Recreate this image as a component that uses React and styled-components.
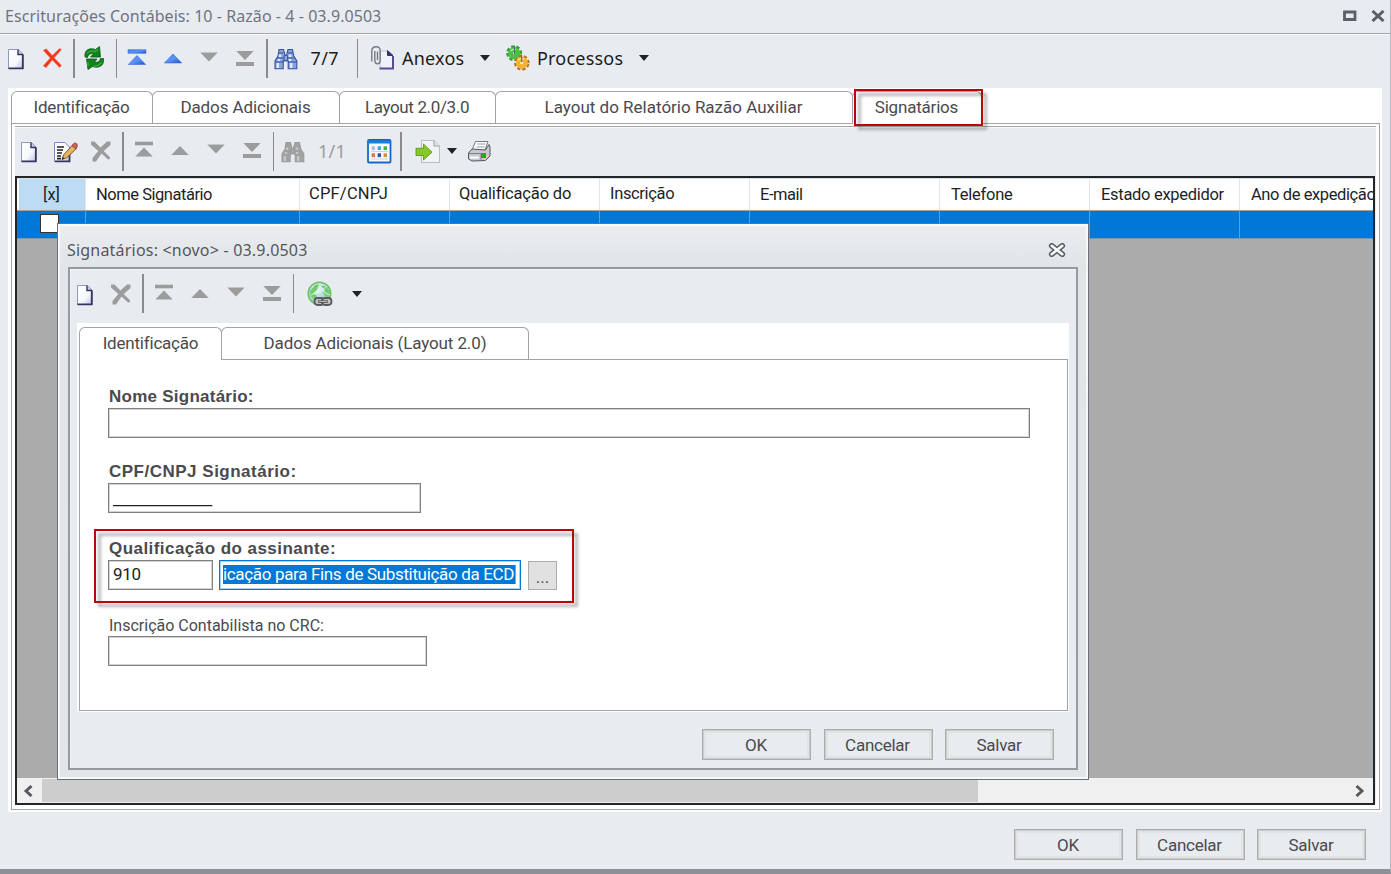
import React from 'react';
import styled, { createGlobalStyle, css } from 'styled-components';

const GlobalStyle = createGlobalStyle`
  * {
    box-sizing: border-box;
  }

  body {
    margin: 0;
    overflow: hidden;
    background: #e8ecf1;
    font-family: Roboto, "Liberation Sans", sans-serif;
    font-size: 17px;
    color: #4a4a4e;
  }

  button, input {
    font: inherit;
    color: inherit;
  }
`;

const Window = styled.div`
  width: 1391px;
  height: 874px;
  display: flex;
  flex-direction: column;
  background: #e8ecf1;
  border-right: 1px solid #b4b8be;
  border-bottom: 5px solid #8d9097;
  position: relative;
`;

const TitleBar = styled.header`
  height: 34px;
  flex: none;
  display: flex;
  align-items: center;
  justify-content: space-between;
  padding: 0 5px;
  border-bottom: 1px solid #a6a6a6;
  box-shadow: 0 1px 0 #f8f8f8;
`;

const Title = styled.h1`
  margin: -1px 0 0;
  font-family: "Noto Sans", sans-serif;
  font-weight: 400;
  font-size: 16px;
  line-height: 22px;
  letter-spacing: ${({ $ls }) => $ls || 0}px;
  color: ${({ $color }) => $color || '#70737f'};
  white-space: nowrap;
`;

const WindowControls = styled.div`
  display: flex;
  gap: 14px;
  margin-top: -1px;
`;

const Toolbar = styled.div`
  height: ${({ $h }) => $h}px;
  flex: none;
  display: flex;
  align-items: center;
  padding-left: ${({ $pl }) => $pl || 0}px;
  padding-bottom: ${({ $pb }) => $pb || 0}px;
`;

const Tool = styled.span`
  display: flex;
  flex: none;
  width: 24px;
  height: 24px;
  margin-left: ${({ $ml }) => $ml ?? 12}px;
  margin-top: ${({ $mt }) => $mt || 0}px;

  svg {
    overflow: visible;
  }
`;

const Separator = styled.span`
  flex: none;
  width: 1.5px;
  height: 39px;
  margin-left: ${({ $ml }) => $ml}px;
  background: #8b8b8b;
`;

const ToolText = styled.span`
  flex: none;
  width: ${({ $w }) => $w}px;
  margin-left: ${({ $ml }) => $ml}px;
  font-family: "Noto Sans", sans-serif;
  font-size: 18px;
  line-height: 24px;
  letter-spacing: ${({ $ls }) => $ls || 0}px;
  color: ${({ $muted }) => ($muted ? '#9b9b9b' : '#1c1c1c')};
  white-space: nowrap;
`;

const Caret = styled.span`
  flex: none;
  margin-left: ${({ $ml }) => $ml}px;
  border: 5.5px solid transparent;
  border-top: 6px solid #222;
  border-bottom: 0;
`;

const TabArea = styled.section`
  display: flex;
  flex-direction: column;
  flex: none;
  background: #fff;
  width: 1374px;
  height: 724px;
  margin-left: 7.5px;
  padding: 3px 2px 2px 3px;
`;

const TabStrip = styled.nav`
  display: flex;
  height: 32px;
  flex: none;
`;

const Tab = styled.div`
  width: ${({ $w }) => $w}px;
  margin-right: -1px;
  display: flex;
  align-items: center;
  justify-content: center;
  padding-bottom: 2px;
  border: 1px solid #a3a3a3;
  border-bottom: 0;
  border-radius: 6px 6px 0 0;
  background: #fff;
  letter-spacing: ${({ $ls }) => $ls || 0}px;
  white-space: nowrap;
  position: relative;

  ${({ $active }) => $active && css`
    z-index: 1;
    margin-bottom: -1px;
    padding-bottom: 3px;
  `}
`;

const TabPage = styled.div`
  flex: 1;
  min-height: 0;
  display: flex;
  flex-direction: column;
  border: 1px solid #a3a3a3;
  background: #fff;
`;

const SignersPanel = styled.div`
  flex: 1;
  min-height: 0;
  margin: 2px 3px 5px 3px;
  border-top: 1px solid #a3a3a3;
  display: flex;
  flex-direction: column;
  background: #e8ecf1;
  box-shadow: inset 0 1px 0 #f7f7f7;
`;

const Grid = styled.div`
  flex: 1;
  min-height: 0;
  margin: 0 1px -1px 0.5px;
  border: 2px solid #22262b;
  background: #ababab;
  display: flex;
  flex-direction: column;
`;

const gridColumns = css`
  display: grid;
  grid-template-columns: 69px 214px 150px 150px 150px 190px 150px 150px 134px;
  overflow: hidden;
`;

const GridHead = styled.div`
  ${gridColumns}
  height: 33px;
  flex: none;
  background: #fff;
  border-top: 1px solid #dde0e3;
  border-bottom: 1px solid #a0a0a0;
  color: #1e1e24;
`;

const HeadCell = styled.div`
  padding: ${({ $up }) => ($up ? 4 : 5)}px 0 0 ${({ $pl }) => $pl || 10}px;
  border-right: 1px solid #e4e4e4;
  line-height: 22px;
  font-size: 16.5px;
  letter-spacing: ${({ $ls }) => $ls || 0}px;
  white-space: nowrap;

  ${({ $selector }) => $selector && css`
    background: linear-gradient(#bcdcf4, #bcdcf4) no-repeat 2px 0;
    text-align: center;
    padding-left: 1px;
  `}
`;

const GridRow = styled.div`
  ${gridColumns}
  height: 28px;
  flex: none;
  background: #0078d7;
  border-bottom: 1px solid #7d98ad;
`;

const RowCell = styled.div`
  border-right: 1px solid #7e96aa;
`;

const CheckBox = styled.span`
  display: block;
  width: 19px;
  height: 19px;
  margin: 3px 0 0 23px;
  border: 1.5px solid #333;
  background: #fff;
`;

const ScrollBar = styled.div`
  height: 25px;
  margin-top: auto;
  display: flex;
  align-items: center;
  background: #f0f0f0;
`;

const ScrollArrow = styled.span`
  width: 25px;
  display: flex;
  justify-content: center;
  padding-right: ${({ $pr }) => $pr || 0}px;
`;

const ScrollThumb = styled.span`
  width: 936px;
  height: 23px;
  margin-right: auto;
  background: #cdcdcd;
`;

const ButtonBar = styled.div`
  display: flex;
  gap: 12.5px;
  justify-content: flex-end;
  padding: ${({ $pad }) => $pad};
`;

const Button = styled.button`
  width: 109px;
  height: 31px;
  padding: 0 1px 0 0;
  border: 1px solid #adadad;
  background: #e8ecf1;
  box-shadow: inset 0 0 0 1px #cbccce, inset 0 0 0 3px #e2e3e3;
  letter-spacing: ${({ $ls }) => $ls ?? -0.25}px;
`;

const Dialog = styled.div`
  position: absolute;
  left: 57px;
  top: 223px;
  width: 1032px;
  height: 557px;
  border: 1px solid #69707a;
  box-shadow: inset 0 0 0 2px #f7f8f9;
  background: linear-gradient(#ebedf0 0, #e1e5e8 44px, #e3e6e9);
  padding: 0 10px;
  display: flex;
  flex-direction: column;
`;

const DialogTitleBar = styled.div`
  height: 43px;
  flex: none;
  display: flex;
  align-items: center;
  justify-content: space-between;
  padding: 9px 12px 0 0;

  h2 {
    margin-left: -1px;
  }
`;

const DialogBody = styled.div`
  height: 503px;
  border: 2px solid #959aa2;
  background: #e8ecf1;
  box-shadow: inset 1px 1px 0 #f3f4f6;
  display: flex;
  flex-direction: column;
`;

const DialogTabs = styled(TabArea)`
  width: 992px;
  height: 389px;
  margin-left: 7px;
  padding: 4px 1px 1px 2px;
`;

const Form = styled(TabPage)`
  padding: 27px 0 0 28px;
`;

const Field = styled.label`
  display: flex;
  flex-direction: column;
  margin-bottom: ${({ $mb }) => $mb || 0}px;
`;

const FieldLabel = styled.span`
  height: 21px;
  line-height: ${({ $bold }) => ($bold ? 20 : 22)}px;
  padding-left: 1px;
  font-size: 16px;
  white-space: nowrap;

  ${({ $bold }) => $bold && css`
    font-family: "Liberation Sans", sans-serif;
    font-size: 17px;
    font-weight: 700;
  `}
  letter-spacing: ${({ $ls }) => $ls || 0}px;
`;

const TextBox = styled.input`
  width: ${({ $w }) => $w}px;
  height: 30px;
  border: 1px solid #808080;
  box-shadow: inset 0 0 0 1px #d4d4d4;
  background: #fff;
  padding: 0 4px 3px;
  outline: none;
  color: #222;
  letter-spacing: -0.3px;
`;

const MaskedBox = styled(TextBox)`
  font-family: "Liberation Sans", sans-serif;
  font-size: 16.2px;
  letter-spacing: 0;
  padding: 0 4px 1px;
`;

const SelectedBox = styled.div`
  width: 302px;
  height: 30px;
  margin: 0 7px 0 6px;
  border: 1px solid #0078d7;
  box-shadow: inset 0 0 0 1px #a9d1f2;
  padding: 4px 4px 0 3px;
  display: flex;
  background: #fff;
`;

const SelectedText = styled.span`
  flex: 1;
  line-height: 18px;
  height: 19px;
  background: #0078d7;
  color: #fff;
  font-size: 17px;
  letter-spacing: ${({ $ls }) => $ls || 0}px;
  white-space: nowrap;
  border-right: 1.5px solid #e88a30;
`;

const LookupRow = styled.div`
  display: flex;
`;

const LookupButton = styled.button`
  width: 29px;
  height: 29px;
  margin-top: 1px;
  padding: 2px 0 0;
  border: 1px solid #adadad;
  background: #e1e1e1;
`;

const Highlight = styled.div`
  position: absolute;
  left: ${({ $x }) => $x}px;
  top: ${({ $y }) => $y}px;
  width: ${({ $w }) => $w}px;
  height: ${({ $h }) => $h}px;
  border: 2px solid #be0606;
  z-index: 3;
  pointer-events: none;

  &::after {
    content: '';
    position: absolute;
    inset: 2px -6px -6px 2px;
    border: 3px solid rgba(70, 70, 70, 0.38);
    filter: blur(1.5px);
    z-index: -1;
  }
`;

const GREY = '#9c9c9c';

const Svg = ({ children }) => (
  <svg width="24" height="24" viewBox="0 0 24 24">{children}</svg>
);

const DocIcon = () => (
  <Svg>
    <defs>
      <linearGradient id="paper" x1="0" y1="0" x2="1" y2="1">
        <stop offset="0" stopColor="#fff" />
        <stop offset="0.6" stopColor="#f7f8fd" />
        <stop offset="1" stopColor="#b9bfdf" />
      </linearGradient>
    </defs>
    <path d="M4.5 3.5H14.5L19 8V22.5H4.5Z" fill="url(#paper)" stroke="#8f98bd" />
    <path d="M14 3.5V8.5H19" fill="#c8cbe6" stroke="#33355e" strokeWidth="1.4" />
    <path d="M18.8 8.5V22.3H4.5" fill="none" stroke="#34365f" strokeWidth="1.8" />
  </Svg>
);

const EditIcon = () => (
  <Svg>
    <path d="M1.5 3.5H12L16.5 8V22.5H1.5Z" fill="url(#paper)" stroke="#7e88b5" />
    <path d="M16.5 12V22.3H2" fill="none" stroke="#34365f" strokeWidth="1.8" />
    <path d="M4 8H11M4 11H10M4 14H9M4 17H8M4 19.6H8" stroke="#222" strokeWidth="1.6" />
    <path d="M19 6.5L23 10L13.5 18.8L9 20.5L10.5 16Z" fill="#e8b458" stroke="#7c5b36" strokeWidth="1" />
    <path d="M19 6.5Q21.5 2.5 24 5Q25 7.5 23 10Z" fill="#d0625a" stroke="#8d3c3c" strokeWidth="0.8" />
    <path d="M9 20.5L9.8 18L11.6 19.6Z" fill="#222" />
  </Svg>
);

const DeleteIcon = () => (
  <Svg>
    <path d="M3.2 4.2L6.4 2.8L12.3 9.5L19.5 2.4L21.5 3.6L14.2 11.8L21.5 19.5L19.5 21.5L12.3 14L6 21.8L3.2 19.8L10.2 12Z" fill="#f0381d" stroke="#f6765d" strokeWidth="0.5" />
  </Svg>
);

const DeleteGreyIcon = () => (
  <Svg>
    <path d="M2 2.5H5.5L11.5 8.5L18 2.5H21.5V6L14.7 12L21 18.3V20L19 20.5L12.5 14.5L7 22.5H3.5V19L9.3 12L2 5.5Z" fill={GREY} />
  </Svg>
);

const RefreshIcon = () => (
  <Svg>
    <path d="M2 11C1 3.5 7 1.5 12.5 3.5L16.5 0.5L17.5 11L7.5 11L10.5 7.8C8 7 5.5 8 4.5 11.5Z" fill="#12831c" stroke="#0b5c12" strokeWidth="0.8" />
    <path d="M20.5 12.5C21.5 20.5 15 22.5 9.5 20.5L5 23.5L3.5 13L14 13L11.8 15.8C14 17 16.5 15.8 17.5 12.5Z" fill="#12831c" stroke="#0b5c12" strokeWidth="0.8" />
    <path d="M4 7.5Q7 3.5 12 5.5L15 3.5M11 20Q16 20.5 18.5 16M5 16V20" stroke="#39b545" strokeWidth="1.2" fill="none" />
  </Svg>
);

const navShapes = {
  first: <><path d="M3 2.7H21V6.3H3Z" /><path d="M12 8.5L20.7 17.5H3.3Z" /></>,
  prev: <path d="M12 7L20.7 16H3.3Z" />,
  next: <path d="M3.3 5.5H20.7L12 14.5Z" />,
  last: <><path d="M3.3 4H20.7L12 13Z" /><path d="M3 15H21V19H3Z" /></>,
};

const NavIcon = ({ kind, blue }) => (
  <Svg>
    <defs>
      <linearGradient id="navBlue" x1="0" y1="0" x2="1" y2="1">
        <stop offset="0" stopColor="#3d7ae8" />
        <stop offset="0.5" stopColor="#5b95f5" />
        <stop offset="1" stopColor="#2451c4" />
      </linearGradient>
    </defs>
    <g fill={blue ? 'url(#navBlue)' : GREY} stroke={blue ? '#2c5fd2' : 'none'} strokeWidth="0.5">
      {navShapes[kind]}
    </g>
  </Svg>
);

const BinocularsIcon = ({ grey }) => {
  const stroke = grey ? GREY : '#3a4fa0';
  const fill = grey ? '#a3a3a3' : '#86a5dc';
  const light = grey ? '#c3c6c9' : '#e4ecfa';
  return (
    <Svg>
      <path d="M5 3.5H9.5L11 9V15H9.2V22.8H1V15L4 10Z M14 3.5H18.5L19.8 10L22.8 15V22.8H14.2V15H12.5V9Z" fill={fill} stroke={stroke} strokeWidth="1.1" />
      <path d="M10 9.5H13.5V14.5H10Z" fill={fill} stroke={stroke} strokeWidth="0.9" />
      <path d="M4.5 7H9.5M14 7H19M3 12H10M13.5 12H20.5M1 16H9.5M14 16H23" stroke={stroke} strokeWidth="1.1" />
      <path d="M3.8 17V22M5 13V15M6 8.5V11M17.2 17V22M16 13V15M16 8.5V11" stroke={light} strokeWidth="2.4" />
    </Svg>
  );
};

const AttachIcon = () => (
  <Svg>
    <path d="M9 5H17L22 10V22.5H9Z" fill="#f0f1fa" stroke="#c1c4df" />
    <path d="M16.5 4.5V9.5H22Z" fill="#3b2f6e" stroke="#3b2f6e" strokeWidth="1" />
    <path d="M22 10V22.5H8.5" fill="none" stroke="#5a4a96" strokeWidth="2" />
    <path d="M3.8 5V14.5Q4 17.8 6.5 17.8Q9.2 17.8 9.2 14.5V4.5Q9.2 0.8 5.2 0.8Q0.8 0.8 0.8 5V15.5" fill="none" stroke="#777b83" strokeWidth="1.4" />
    <path d="M6.5 5.5V14" stroke="#777b83" strokeWidth="1.4" />
  </Svg>
);

const GearsIcon = () => (
  <Svg>
    <circle cx="8.2" cy="7.2" r="6" fill="none" stroke="#3a9a36" strokeWidth="4" strokeDasharray="3 1.71" transform="rotate(12 8.2 7.2)" />
    <circle cx="8.2" cy="7.2" r="3.6" fill="none" stroke="#4cc046" strokeWidth="5" />
    <path d="M4.5 5Q7 2.5 10 3.5" stroke="#a6ea9c" strokeWidth="1.4" fill="none" />
    <path d="M8.5 0V8" stroke="#5d6a6c" strokeWidth="1.2" />
    <circle cx="15.8" cy="16.8" r="5.8" fill="none" stroke="#b5741a" strokeWidth="4" strokeDasharray="2.9 1.66" transform="rotate(10 15.8 16.8)" />
    <circle cx="15.8" cy="16.8" r="3.6" fill="none" stroke="#f2b233" strokeWidth="5" />
    <path d="M12 14Q15 11.5 18.5 13" stroke="#fbe08a" strokeWidth="1.4" fill="none" />
    <circle cx="15.8" cy="16.8" r="1.5" fill="#f5ecd8" />
    <path d="M15.6 9V16" stroke="#7a6a50" strokeWidth="1.2" />
  </Svg>
);

const dots = ['#b3b9dd', '#3fa9e0', '#4cae4f', '#e2734c', '#2b56b0', '#c9962f'];

const CalendarIcon = () => (
  <Svg>
    <rect x="1" y="1" width="22.5" height="22.5" rx="1" fill="#f5f9fe" stroke="#1668c8" strokeWidth="1.8" />
    <path d="M1 1.5H23.5V4.5H1Z" fill="#2579d8" />
    {dots.map((color, i) => (
      <rect key={color} x={4.6 + (i % 3) * 6} y={7.3 + Math.floor(i / 3) * 7} width="3.4" height="3.8" fill={color} />
    ))}
    <path d="M4 12.5H21M4 20H21" stroke="#c5d5ea" strokeWidth="1" />
  </Svg>
);

const ExportIcon = () => (
  <Svg>
    <path d="M5.5 1.5H18L23.5 7V23.5H5.5Z" fill="#f2f3f5" stroke="#b9bcc0" />
    <path d="M18 1.5V7H23.5" fill="#e1e3e5" stroke="#9da1a6" />
    <path d="M0 9.3H7.5V5L16 13.2L7.5 21V16.5H0Z" fill="#86c72d" stroke="#5f971b" strokeWidth="0.9" />
  </Svg>
);

const PrinterIcon = () => (
  <Svg>
    <path d="M8.5 2.5H21L18 11H5Z" fill="#fafafa" stroke="#777b82" />
    <path d="M10.5 5H18.5M9.5 8H17.5" stroke="#9da2a9" />
    <path d="M1.5 14L5 10L18.5 11L22 5.5L23 8V17L18.5 21.5L5 22L1.5 20Z" fill="#c6c9ce" stroke="#555a61" />
    <path d="M2 14.5H14V21" fill="none" stroke="#7d828a" />
    <path d="M3 18.5H12" stroke="#fff" strokeWidth="2" />
    <rect x="14" y="14" width="5" height="5" fill="#1cab25" />
  </Svg>
);

const GlobeLinkIcon = () => (
  <Svg>
    <defs>
      <radialGradient id="globe" cx="0.4" cy="0.3" r="0.8">
        <stop offset="0" stopColor="#e9f6f5" />
        <stop offset="0.6" stopColor="#a3d5d6" />
        <stop offset="1" stopColor="#4f9fae" />
      </radialGradient>
    </defs>
    <circle cx="11.5" cy="11.5" r="11.3" fill="url(#globe)" stroke="#6cc45e" strokeWidth="1.5" />
    <path d="M2 9L7 3L11 2L9 8L5 11L9 14L7 18L2.5 14ZM13 4L18 4L22 10L22 14L18 15L15 11L17 8Z" fill="#74cc68" />
    <path d="M11 2L17 11L22 13M3 13L13 9L19 4" stroke="#e3f3f3" strokeWidth="0.9" fill="none" />
    <rect x="6.5" y="16" width="9.5" height="7" rx="3.2" fill="#c4c4c4" stroke="#5a5a5a" strokeWidth="1.8" />
    <rect x="14" y="16" width="9.5" height="7" rx="3.2" fill="#c4c4c4" stroke="#5a5a5a" strokeWidth="1.8" />
    <path d="M10 19.5H20" stroke="#444" strokeWidth="2.6" />
    <path d="M10.5 19.3H19.5" stroke="#d8d8d8" strokeWidth="1" />
  </Svg>
);

const mainTabs = [
  { label: 'Identificação', width: 142, ls: -0.17 },
  { label: 'Dados Adicionais', width: 188, ls: -0.1 },
  { label: 'Layout 2.0/3.0', width: 157, ls: -0.36 },
  { label: 'Layout do Relatório Razão Auxiliar', width: 358, ls: 0 },
  { label: 'Signatários', width: 130, ls: -0.2, active: true },
];

const columns = [
  { label: '[x]', selector: true },
  { label: 'Nome Signatário', ls: -0.47 },
  { label: 'CPF/CNPJ', up: true, pl: 9, ls: 0.2 },
  { label: 'Qualificação do', up: true, pl: 9, ls: -0.16 },
  { label: 'Inscrição', up: true, ls: -0.35 },
  { label: 'E-mail', ls: -0.5 },
  { label: 'Telefone', pl: 11, ls: -0.25 },
  { label: 'Estado expedidor', pl: 11, ls: -0.3 },
  { label: 'Ano de expedição', pl: 11, ls: -0.4 },
];

const SignerDialog = () => (
  <Dialog>
    <DialogTitleBar>
      <Title as="h2" $color="#55565b" $ls={0.2}>Signatários: &lt;novo&gt; - 03.9.0503</Title>
      <svg width="18" height="14" viewBox="0 0 18 14">
        <path d="M3.7 2.8L14.3 11.2M14.3 2.8L3.7 11.2" stroke="#5b5e64" strokeWidth="5.6" strokeLinecap="round" />
        <path d="M3.7 2.8L14.3 11.2M14.3 2.8L3.7 11.2" stroke="#fbfbfb" strokeWidth="2.6" strokeLinecap="round" />
      </svg>
    </DialogTitleBar>
    <DialogBody>
      <Toolbar $h={54} $pb={5}>
        <Tool $ml={3}><DocIcon /></Tool>
        <Tool><DeleteGreyIcon /></Tool>
        <Separator $ml={9} />
        <Tool $ml={8}><NavIcon kind="first" /></Tool>
        <Tool><NavIcon kind="prev" /></Tool>
        <Tool><NavIcon kind="next" /></Tool>
        <Tool><NavIcon kind="last" /></Tool>
        <Separator $ml={9} />
        <Tool $ml={14}><GlobeLinkIcon /></Tool>
        <Caret $ml={20} />
      </Toolbar>
      <DialogTabs>
        <TabStrip>
          <Tab $w={143} $ls={-0.2} $active>Identificação</Tab>
          <Tab $w={308} $ls={-0.12}>Dados Adicionais (Layout 2.0)</Tab>
        </TabStrip>
        <Form>
          <Field $mb={24}>
            <FieldLabel $bold $ls={0.25}>Nome Signatário:</FieldLabel>
            <TextBox $w={922} readOnly />
          </Field>
          <Field $mb={26}>
            <FieldLabel $bold $ls={0.5}>CPF/CNPJ Signatário:</FieldLabel>
            <MaskedBox $w={313} readOnly value="___________" />
          </Field>
          <Field $mb={25}>
            <FieldLabel $bold $ls={0.45}>Qualificação do assinante:</FieldLabel>
            <LookupRow>
              <TextBox $w={105} readOnly value="910" />
              <SelectedBox>
                <SelectedText $ls={-0.34}>icação para Fins de Substituição da ECD</SelectedText>
              </SelectedBox>
              <LookupButton>...</LookupButton>
            </LookupRow>
          </Field>
          <Field>
            <FieldLabel>Inscrição Contabilista no CRC:</FieldLabel>
            <TextBox $w={319} readOnly />
          </Field>
        </Form>
      </DialogTabs>
      <ButtonBar $pad="17px 22px 0 0">
        <Button>OK</Button>
        <Button>Cancelar</Button>
        <Button>Salvar</Button>
      </ButtonBar>
    </DialogBody>
  </Dialog>
);

const App = () => (
  <>
    <GlobalStyle />
    <Window>
      <TitleBar>
        <Title $ls={0.06}>Escriturações Contábeis: 10 - Razão - 4 - 03.9.0503</Title>
        <WindowControls>
          <svg width="14" height="12" viewBox="0 0 14 12">
            <path d="M1.5 2H12V9.5H1.5Z" fill="none" stroke="#5c5f65" strokeWidth="2.8" />
          </svg>
          <svg width="14" height="12" viewBox="0 0 14 12">
            <path d="M1.5 1L12.5 11M12.5 1L1.5 11" stroke="#5c5f65" strokeWidth="3" />
          </svg>
        </WindowControls>
      </TitleBar>

      <Toolbar $h={54} $pb={6}>
        <Tool $ml={4}><DocIcon /></Tool>
        <Tool><DeleteIcon /></Tool>
        <Separator $ml={9} />
        <Tool $ml={8}><RefreshIcon /></Tool>
        <Separator $ml={9} />
        <Tool $ml={8} $mt={2}><NavIcon kind="first" blue /></Tool>
        <Tool $mt={2}><NavIcon kind="prev" blue /></Tool>
        <Tool $mt={2}><NavIcon kind="next" /></Tool>
        <Tool $mt={2}><NavIcon kind="last" /></Tool>
        <Separator $ml={9} />
        <Tool $ml={6}><BinocularsIcon /></Tool>
        <ToolText $ml={13} $w={46} $ls={0.4}>7/7</ToolText>
        <Separator $ml={0} />
        <Tool $ml={13}><AttachIcon /></Tool>
        <ToolText $ml={7} $w={78} $ls={0.2}>Anexos</ToolText>
        <Caret $ml={0} />
        <Tool $ml={16}><GearsIcon /></Tool>
        <ToolText $ml={7} $w={102} $ls={0.2}>Processos</ToolText>
        <Caret $ml={0} />
      </Toolbar>

      <TabArea>
        <TabStrip>
          {mainTabs.map((tab) => (
            <Tab key={tab.label} $w={tab.width} $ls={tab.ls} $active={tab.active}>{tab.label}</Tab>
          ))}
        </TabStrip>
        <TabPage>
          <SignersPanel>
            <Toolbar $h={49} $pb={1}>
              <Tool $ml={2.5}><DocIcon /></Tool>
              <Tool><EditIcon /></Tool>
              <Tool><DeleteGreyIcon /></Tool>
              <Separator $ml={9} />
              <Tool $ml={8}><NavIcon kind="first" /></Tool>
              <Tool><NavIcon kind="prev" /></Tool>
              <Tool><NavIcon kind="next" /></Tool>
              <Tool><NavIcon kind="last" /></Tool>
              <Separator $ml={9} />
              <Tool $ml={7}><BinocularsIcon grey /></Tool>
              <ToolText $ml={13} $w={49} $ls={0.3} $muted>1/1</ToolText>
              <Tool $ml={0}><CalendarIcon /></Tool>
              <Separator $ml={9} />
              <Tool $ml={14}><ExportIcon /></Tool>
              <Caret $ml={7} />
              <Tool $ml={10}><PrinterIcon /></Tool>
            </Toolbar>
            <Grid>
              <GridHead>
                {columns.map((col) => (
                  <HeadCell key={col.label} $up={col.up} $pl={col.pl} $ls={col.ls} $selector={col.selector}>{col.label}</HeadCell>
                ))}
              </GridHead>
              <GridRow>
                {columns.map((col) => (
                  <RowCell key={col.label}>{col.selector && <CheckBox />}</RowCell>
                ))}
              </GridRow>
              <ScrollBar>
                <ScrollArrow $pr={3}>
                  <svg width="10" height="12" viewBox="0 0 10 12">
                    <path d="M8.5 1L3 6L8.5 11" fill="none" stroke="#55585c" strokeWidth="2.9" />
                  </svg>
                </ScrollArrow>
                <ScrollThumb />
                <ScrollArrow>
                  <svg width="10" height="12" viewBox="0 0 10 12">
                    <path d="M1.5 1L7 6L1.5 11" fill="none" stroke="#55585c" strokeWidth="2.9" />
                  </svg>
                </ScrollArrow>
              </ScrollBar>
            </Grid>
          </SignersPanel>
        </TabPage>
      </TabArea>

      <ButtonBar $pad="17px 24px 0 0">
        <Button>OK</Button>
        <Button>Cancelar</Button>
        <Button>Salvar</Button>
      </ButtonBar>

      <SignerDialog />
      <Highlight $x={854} $y={89} $w={129} $h={37} />
      <Highlight $x={94} $y={529} $w={480} $h={74} />
    </Window>
  </>
);

export default App;
